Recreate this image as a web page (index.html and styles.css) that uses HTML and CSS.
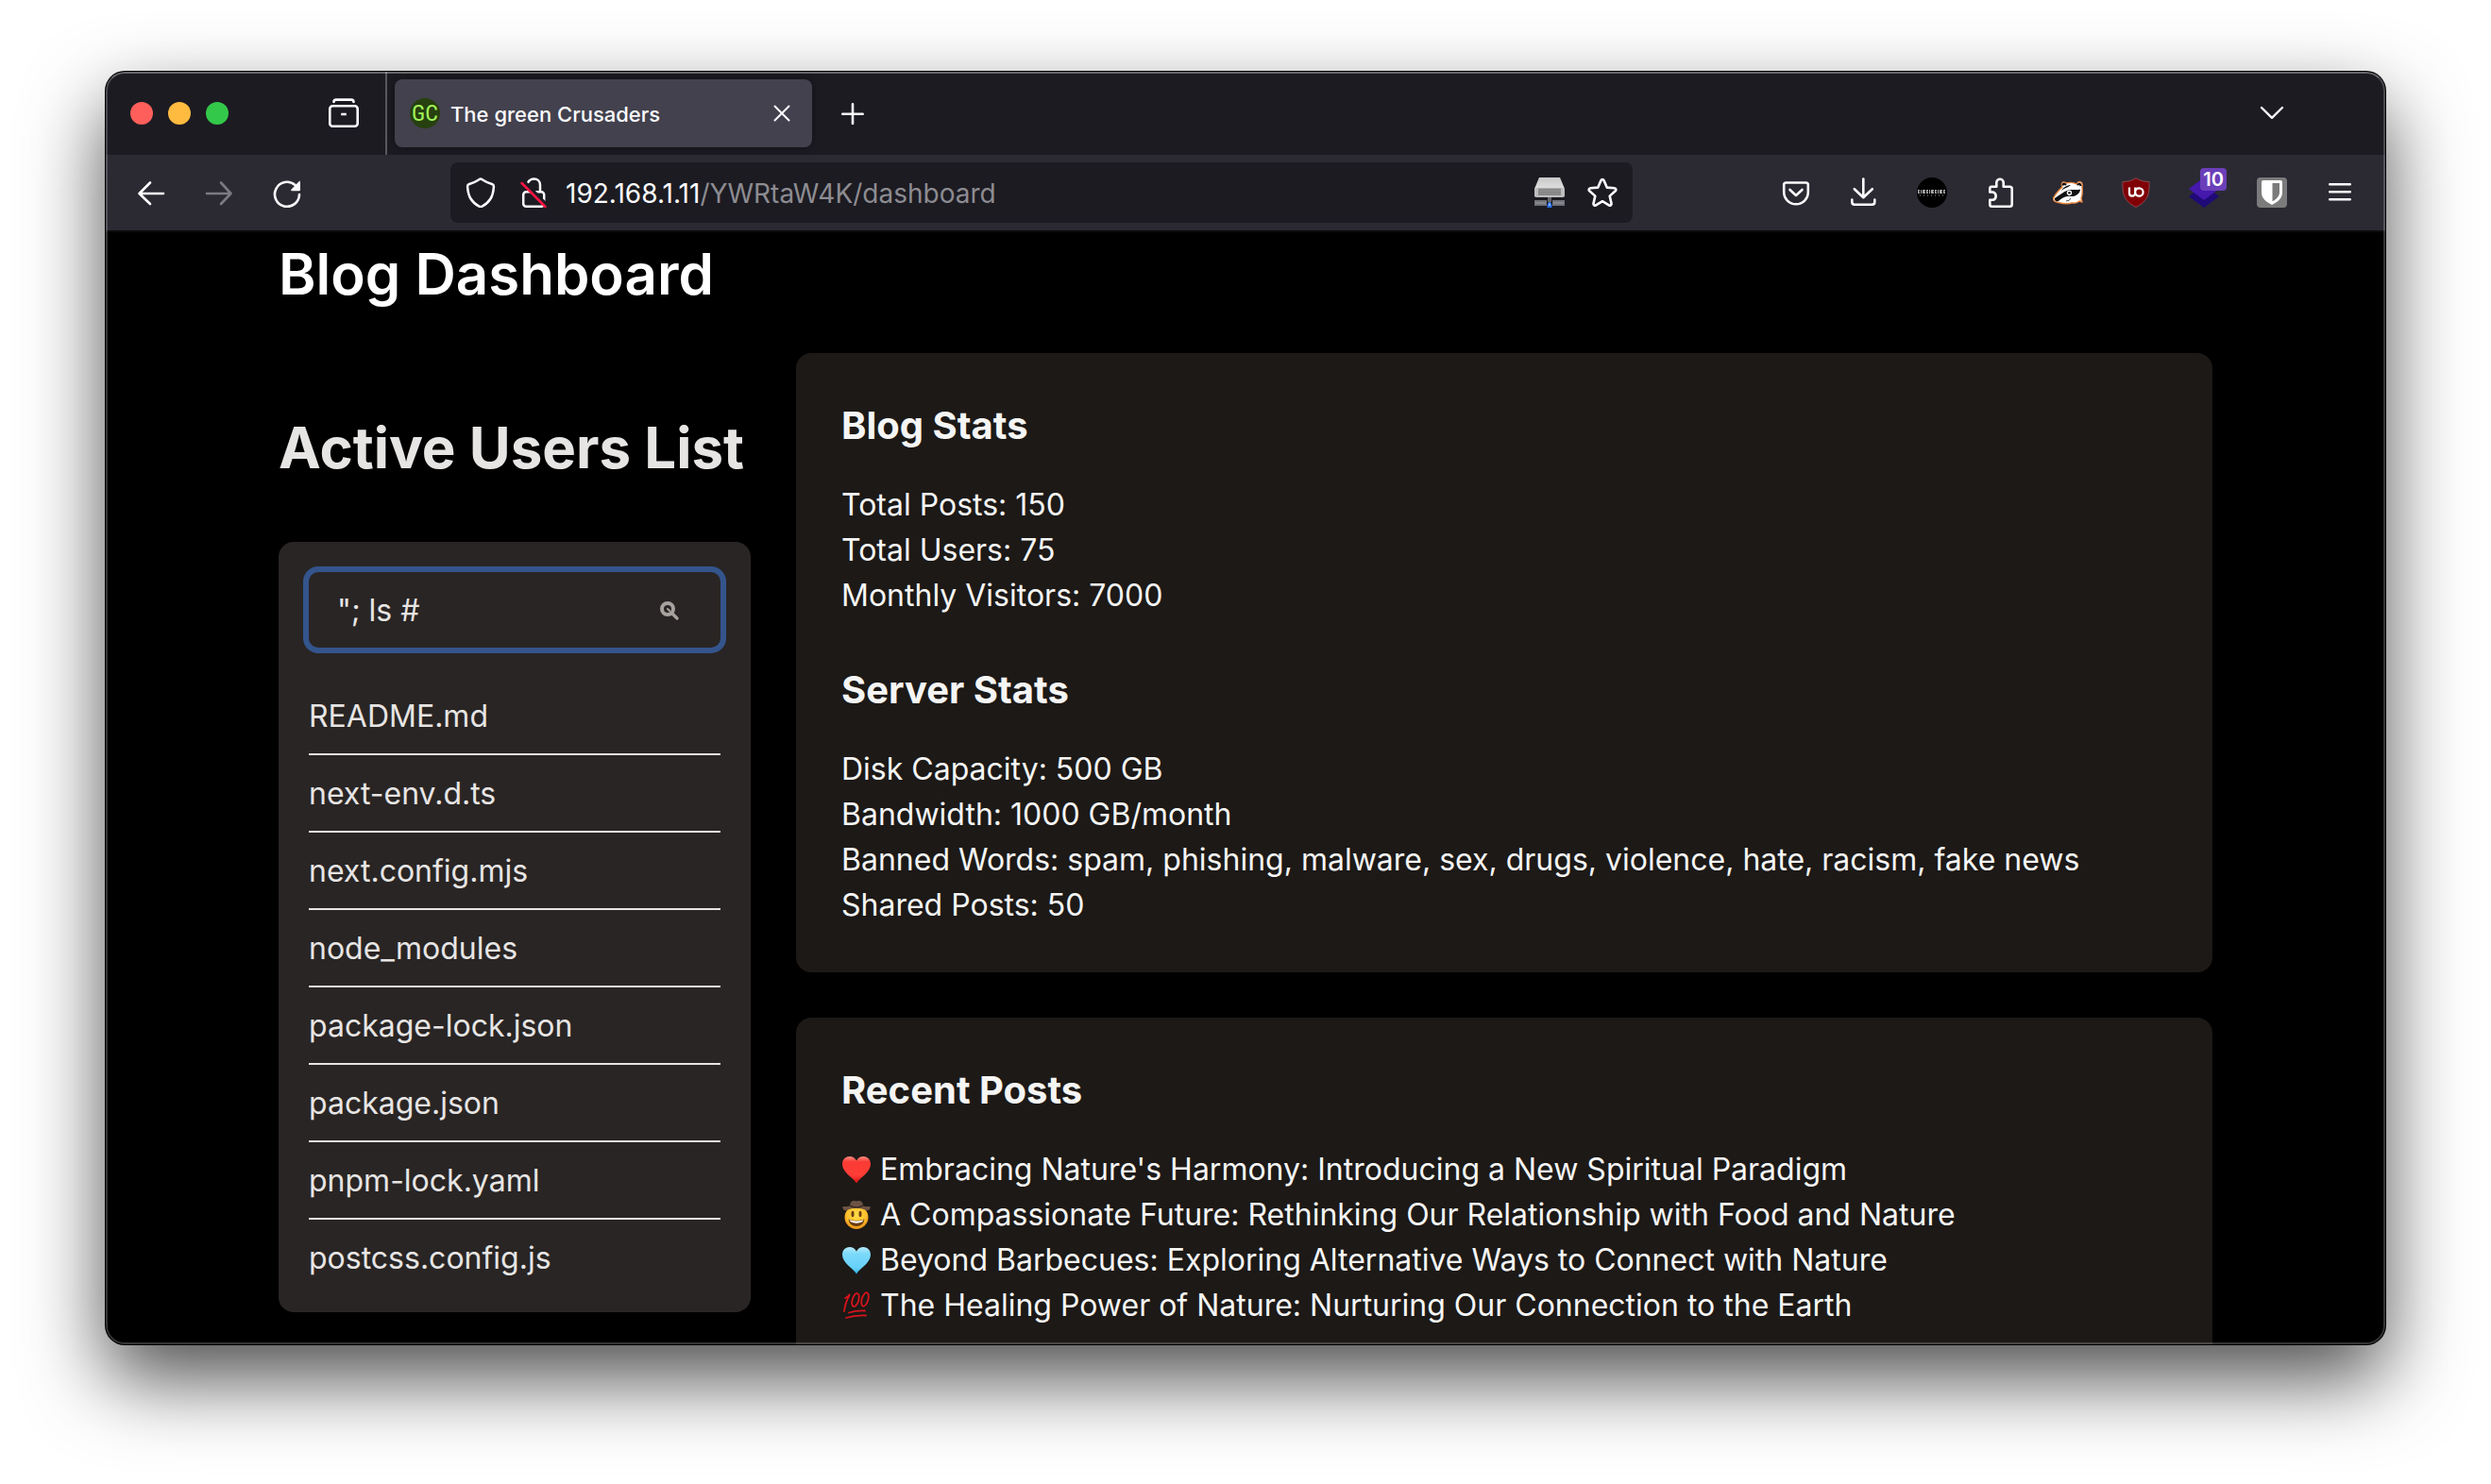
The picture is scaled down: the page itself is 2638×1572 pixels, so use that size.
FILE: index.html
```html
<!DOCTYPE html>
<html lang="en">
<head>
<meta charset="utf-8">
<meta name="viewport" content="width=device-width, initial-scale=1">
<title>The green Crusaders</title>
<link rel="stylesheet" href="styles.css">
</head>
<body>
<div class="window">
  <div class="tabbar">
    <div class="tabbar-start">
      <button class="light light-close" aria-label="Close window"></button>
      <button class="light light-min" aria-label="Minimize window"></button>
      <button class="light light-max" aria-label="Zoom window"></button>
      <button class="icon-btn recent" aria-label="Recent browsing">
        <svg width="32" height="32" viewBox="0 0 32 32" fill="none" stroke="#fbfbfe" stroke-width="2.6" stroke-linecap="round"><rect x="1.3" y="8.3" width="29.4" height="21.4" rx="3"/><path d="M5.500 4C5.500 2.500 6.500 1.600 8 1.600H24C25.500 1.600 26.500 2.500 26.500 4"/><path d="M13.200 17H18.800" stroke-linecap="butt"/></svg>
      </button>
    </div>
    <div class="tab">
      <span class="favicon">GC</span>
      <span class="tab-title">The green Crusaders</span>
      <button class="icon-btn tab-close" aria-label="Close tab">
        <svg width="20" height="20" viewBox="0 0 20 20" fill="none" stroke="#fbfbfe" stroke-width="2" stroke-linecap="round"><path d="M2.500 2.500 17.500 17.500M17.500 2.500 2.500 17.500"/></svg>
      </button>
    </div>
    <button class="icon-btn new-tab" aria-label="New tab">
      <svg width="24" height="24" viewBox="0 0 24 24" fill="none" stroke="#fbfbfe" stroke-width="2.600" stroke-linecap="round"><path d="M12 2.300V23M1.300 12.800H22.700"/></svg>
    </button>
    <button class="icon-btn all-tabs" aria-label="List all tabs">
      <svg width="26" height="26" viewBox="0 0 26 26" fill="none" stroke="#fbfbfe" stroke-width="2.400" stroke-linecap="round" stroke-linejoin="round"><path d="M2 7 13 17.800 24 7"/></svg>
    </button>
  </div>

  <div class="toolbar">
    <button class="icon-btn tool" aria-label="Back">
      <svg width="32" height="32" viewBox="0 0 32 32" fill="none" stroke="#fbfbfe" stroke-width="2.600" stroke-linecap="round" stroke-linejoin="round"><path d="M29 17H3.500M15 5.500 3.500 17 15 28"/></svg>
    </button>
    <button class="icon-btn tool" aria-label="Forward" disabled>
      <svg width="32" height="32" viewBox="0 0 32 32" fill="none" stroke="#7c7b82" stroke-width="2.600" stroke-linecap="round" stroke-linejoin="round"><path d="M3 17H28.500M18 5.500 28.500 17 18 28"/></svg>
    </button>
    <button class="icon-btn tool" aria-label="Reload">
      <svg width="32" height="32" viewBox="0 0 32 32"><path d="M24.500 8A13 13 0 1 0 29 18" fill="none" stroke="#fbfbfe" stroke-width="2.600" stroke-linecap="round"/><path d="M30 4.500V13.300C30 14 29.500 14.200 29 14.200H21C20 14.200 19.800 13.400 20.400 12.800L28.600 4.200C29.200 3.600 30 3.800 30 4.500Z" fill="#fbfbfe"/></svg>
    </button>
    <div class="spacer"></div>
    <div class="urlbar">
      <div class="url-icons">
        <svg width="32" height="32" viewBox="0 0 32 32" fill="none" stroke="#fbfbfe" stroke-width="2.500" stroke-linejoin="round"><path d="M16 1.500C16.800 1.500 17.500 2.100 18.500 2.700C21 4.300 24.500 6 28 7C29.300 7.400 30 8.200 29.900 9.600C29.600 14.500 29 18.500 26.500 22.500C24 26.500 20.500 29.200 17.500 30.600C16.400 31.100 15.600 31.100 14.500 30.600C11.500 29.200 8 26.500 5.500 22.500C3 18.500 2.400 14.500 2.100 9.600C2 8.200 2.700 7.400 4 7C7.500 6 11 4.300 13.500 2.700C14.500 2.100 15.200 1.500 16 1.500Z"/></svg>
        <svg width="32" height="32" viewBox="0 0 32 32" fill="none" stroke="#fbfbfe" stroke-width="2.500" stroke-linecap="round"><rect x="5.200" y="15.200" width="22" height="15.500" rx="3"/><path d="M10 5.500C11.500 2.800 13.600 1.500 16.500 1.500C20.500 1.500 23 4.300 23 8V15"/><path d="M5.800 4.500 30 29.500" stroke="#1c1b22" stroke-width="4"/><path d="M3.600 6 28.500 31" stroke="#ff1443"/></svg>
      </div>
      <div class="url"><span class="host">192.168.1.11</span>/YWRtaW4K/dashboard</div>
      <div class="url-icons">
        <svg width="32" height="32" viewBox="0 0 32 32"><defs><linearGradient id="disk" x1="0" y1="0" x2="0" y2="1"><stop offset="0" stop-color="#c9c9c9"/><stop offset="1" stop-color="#ededed"/></linearGradient></defs><path d="M5 0H27L32 12V20H0V12Z" fill="url(#disk)"/><path d="M0 11H32V19Q32 21 30 21H2Q0 21 0 19Z" fill="#bdbdbd"/><path d="M4 11.500H28V19H4Z" fill="#999"/><path d="M4 13.200H28M4 15.500H28M4 17.700H28" stroke="#777" stroke-width="1"/><path d="M0 24H13V30H0ZM19 24H32V30H19Z" fill="#707277"/><path d="M1 27H12M20 27H31" stroke="#85888d" stroke-width="2"/><path d="M14 21H18V26H14Z" fill="#666"/><path d="M13.500 32V29L15 26H17L18.500 29V32Z" fill="#2c6be0"/><path d="M15 27.500H17V30H15Z" fill="#79b3ff"/></svg>
        <button class="icon-btn" aria-label="Bookmark this page">
          <svg width="32" height="32" viewBox="0 0 32 32" fill="none" stroke="#fbfbfe" stroke-width="2.600" stroke-linejoin="round"><path d="M14.400 3.200C15 1.700 17 1.700 17.600 3.200L20.700 10.600L28.700 11.300C30.300 11.500 30.900 13.200 29.700 14.300L23.700 19.600L25.500 27.600C25.800 29.100 24.200 30.200 22.900 29.400L16 25.200L9.100 29.400C7.800 30.200 6.200 29.100 6.500 27.600L8.300 19.600L2.300 14.300C1.100 13.200 1.700 11.500 3.300 11.300L11.300 10.600Z"/></svg>
        </button>
      </div>
    </div>
    <div class="spacer"></div>
    <button class="icon-btn tool" aria-label="Save to Pocket">
      <svg width="32" height="32" viewBox="0 0 32 32" fill="none" stroke="#fbfbfe" stroke-width="2.600" stroke-linecap="round" stroke-linejoin="round"><path d="M5.500 5.500H26.500Q28.800 5.500 28.800 7.800V15.500A12.800 12.800 0 0 1 3.200 15.500V7.800Q3.200 5.500 5.500 5.500Z"/><path d="M9.500 13 16 19 22.500 13"/></svg>
    </button>
    <button class="icon-btn tool" aria-label="Downloads">
      <svg width="32" height="32" viewBox="0 0 32 32" fill="none" stroke="#fbfbfe" stroke-width="2.600" stroke-linecap="round" stroke-linejoin="round"><path d="M15.300 1.500V21M5.800 12.200 15.300 21.200 24.800 12.200M3.300 23.500V26Q3.300 28.700 6 28.700H24.600Q27.300 28.700 27.300 26V23.500"/></svg>
    </button>
    <button class="icon-btn tool" aria-label="Extension">
      <svg width="32" height="32" viewBox="0 0 32 32"><circle cx="16" cy="16" r="16" fill="#000"/><path d="M1 15H31" stroke="#a8a8a8" stroke-width="4" stroke-dasharray="2 1 1 1 3 1"/><path d="M2 15H30" stroke="#222" stroke-width="1" stroke-dasharray="1 2"/><path d="M3 19H29" stroke="#666" stroke-width="1.500" stroke-dasharray="1 3"/></svg>
    </button>
    <button class="icon-btn tool" aria-label="Extensions">
      <svg width="32" height="32" viewBox="0 0 32 32" fill="none" stroke="#fbfbfe" stroke-width="2.600" stroke-linejoin="round"><path d="M6.700 9.700H12.300V5.500A3.700 3.700 0 0 1 19.700 5.500V9.700H26.300Q28.700 9.700 28.700 12V28.500Q28.700 30.700 26.300 30.700H7.500Q5.300 30.700 5.300 28.500V23.800H8.500A4.300 4.300 0 0 0 8.500 15.500H5.300V12Q5.300 9.700 6.700 9.700Z"/></svg>
    </button>
    <button class="icon-btn tool" aria-label="Privacy Badger">
      <svg width="32" height="32" viewBox="0 0 32 32"><path d="M1 21C3 17 7 13 10 10C8 6 11 3 14 6C18 5 22 5 25 7C27 3 32 4 31 9C31 13 32 18 30 22L31 26L28 25C25 28 22 27 20 27C15 29 8 27 4 26C1 26 0 23 1 21Z" fill="#fff" stroke="#e8863c" stroke-width="1.400" stroke-linejoin="round"/><path d="M2 22C7 19 11 15 16 13.500C20 12 25 14 29 12.500C29 17 24 20.500 19 20C14 19 9 22.500 6 25C3 26 1.500 24 2 22Z" fill="#111"/><path d="M9 14C11 10.500 15 8 19 8C16 10.500 12 11.500 9 14Z" fill="#111"/><path d="M10.500 8.500Q11 5 14 8M26 8Q29 5 29.500 9" fill="none" stroke="#111" stroke-width="2.200"/><circle cx="17.500" cy="16.300" r="2.700" fill="#fff"/><circle cx="17.500" cy="16.300" r="1.300" fill="#111"/><path d="M14 25Q18 25 19 22" fill="none" stroke="#555" stroke-width="1"/></svg>
    </button>
    <button class="icon-btn tool" aria-label="uBlock Origin">
      <svg width="32" height="32" viewBox="0 0 32 32"><path d="M16 .500C20 3.500 25 4.500 30 4.500C30.500 17 29 25 16 31.500C3 25 1.500 17 2 4.500C7 4.500 12 3.500 16 .500Z" fill="#800006" stroke="#8b4a50" stroke-width="1"/><path d="M9 10.500V16.500Q9 19.700 12 19.700Q15.200 19.700 15.200 16V10.500M15.200 15.500A4.200 4.200 0 1 0 19.400 11.300Q15.200 11.300 15.200 15.500" fill="none" stroke="#fff" stroke-width="2.200"/></svg>
    </button>
    <button class="icon-btn tool layers" aria-label="Wappalyzer, 10 detected">
      <svg width="32" height="32" viewBox="0 0 32 32"><path d="M16 8 32 20 16 32 0 20Z" fill="#1f0a78"/><path d="M16 0 32 12 16 24 0 12Z" fill="#4619ad"/></svg>
      <span class="badge">10</span>
    </button>
    <button class="icon-btn tool" aria-label="Bitwarden">
      <svg width="32" height="32" viewBox="0 0 32 32"><rect width="32" height="32" rx="4" fill="#7b7b7b"/><path d="M7 3H25Q27 3 27 5V16C27 22 22 26 16 29C10 26 5 22 5 16V5Q5 3 7 3Z" fill="#fff"/><path d="M16.500 6H24V16C24 20 20.500 23 16.500 25.300Z" fill="#7b7b7b"/></svg>
    </button>
    <button class="icon-btn tool" aria-label="Menu">
      <svg width="32" height="32" viewBox="0 0 32 32" fill="none" stroke="#fbfbfe" stroke-width="2.400" stroke-linecap="round"><path d="M5.200 7.200H26.800M5.200 15.200H26.800M5.200 23.200H26.800"/></svg>
    </button>
  </div>

  <main class="page">
    <div class="container">
      <h1 class="title">Blog Dashboard</h1>
      <div class="columns">
        <aside class="users">
          <h2 class="title users-title">Active Users List</h2>
          <div class="users-card">
            <div class="search">
              <input class="search-input" type="text" aria-label="Search users" value="&quot;; ls #">
              <svg width="20" height="20" viewBox="0 0 20 20" fill="none" stroke="#a8a29e" stroke-linecap="round"><circle cx="8" cy="8" r="6" stroke-width="4"/><path d="M12.500 12.500 18 18" stroke-width="3.200"/><path d="M8 8 10.500 10.500" stroke-width="2"/></svg>
            </div>
            <ul class="users-list">
              <li>README.md</li>
              <li>next-env.d.ts</li>
              <li>next.config.mjs</li>
              <li>node_modules</li>
              <li>package-lock.json</li>
              <li>package.json</li>
              <li>pnpm-lock.yaml</li>
              <li>postcss.config.js</li>
            </ul>
          </div>
        </aside>
        <div class="panels">
          <section class="panel">
            <div class="group">
              <h3>Blog Stats</h3>
              <p>Total Posts: 150</p>
              <p>Total Users: 75</p>
              <p>Monthly Visitors: 7000</p>
            </div>
            <div class="group">
              <h3>Server Stats</h3>
              <p>Disk Capacity: 500 GB</p>
              <p>Bandwidth: 1000 GB/month</p>
              <p>Banned Words: spam, phishing, malware, sex, drugs, violence, hate, racism, fake news</p>
              <p>Shared Posts: 50</p>
            </div>
          </section>
          <section class="panel">
            <div class="group">
              <h3>Recent Posts</h3>
              <ul class="posts">
                <li>
                  <svg width="32" height="32" viewBox="0 0 32 32"><defs><linearGradient id="red" x1="0" y1="0" x2="0" y2="1"><stop offset="0" stop-color="#ff8d80"/><stop offset=".2" stop-color="#fa3a34"/><stop offset=".7" stop-color="#ff3d37"/><stop offset="1" stop-color="#d01010"/></linearGradient></defs><path d="M16 30.500C12 24 1 19 1 10C1 1.500 12 -1 16 6.500C20 -1 31 1.500 31 10C31 19 20 24 16 30.500Z" fill="url(#red)"/></svg>
                  <span>Embracing Nature's Harmony: Introducing a New Spiritual Paradigm</span>
                </li>
                <li>
                  <svg width="32" height="32" viewBox="0 0 32 32"><defs><radialGradient id="face" cx=".5" cy=".4" r=".6"><stop offset="0" stop-color="#ffdf49"/><stop offset=".7" stop-color="#fbbd2c"/><stop offset="1" stop-color="#e38b14"/></radialGradient></defs><circle cx="16" cy="18.500" r="12.500" fill="url(#face)"/><path d="M1 7.500C4 6 7 8 9 6C9 2 12 0 16 1.500C20 0 23 2 23 6C25 8 28 6 31 7.500C30 11 28 12 26 11C20 8 12 8 6 11C4 12 2 11 1 7.500Z" fill="#6c5344"/><path d="M9 6Q16 10 23 6" fill="none" stroke="#3b2a22" stroke-width="1.500"/><ellipse cx="12" cy="15" rx="1.500" ry="3.200" fill="#6b3c10"/><ellipse cx="20" cy="15" rx="1.500" ry="3.200" fill="#6b3c10"/><path d="M7.500 20.500Q16 23.500 24.500 20.500Q23.500 28 16 28Q8.500 28 7.500 20.500Z" fill="#6b3c10"/><path d="M8.500 21.200Q16 24 23.500 21.200Q23 24 16 24.700Q9 24 8.500 21.200Z" fill="#fff"/></svg>
                  <span>A Compassionate Future: Rethinking Our Relationship with Food and Nature</span>
                </li>
                <li>
                  <svg width="32" height="32" viewBox="0 0 32 32"><defs><linearGradient id="blue" x1="0" y1="0" x2="0" y2="1"><stop offset="0" stop-color="#b5e9fb"/><stop offset=".25" stop-color="#7cdafa"/><stop offset=".8" stop-color="#64d0f8"/><stop offset="1" stop-color="#22aee0"/></linearGradient></defs><path d="M16 30.500C12 24 1 19 1 10C1 1.500 12 -1 16 6.500C20 -1 31 1.500 31 10C31 19 20 24 16 30.500Z" fill="url(#blue)"/></svg>
                  <span>Beyond Barbecues: Exploring Alternative Ways to Connect with Nature</span>
                </li>
                <li>
                  <svg width="32" height="32" viewBox="0 0 32 32" fill="none" stroke="#d9141c" stroke-width="1.800" stroke-linecap="round"><path d="M4 8Q7 7 9 4Q4 13 3 22"/><ellipse cx="15" cy="10" rx="3.300" ry="7.300" transform="rotate(17 15 10)"/><ellipse cx="25" cy="9.500" rx="3.300" ry="7.500" transform="rotate(17 25 9.500)"/><path d="M8 23.500Q16 21 25 21.500M5 29Q15 26 26 26.500"/></svg>
                  <span>The Healing Power of Nature: Nurturing Our Connection to the Earth</span>
                </li>
              </ul>
            </div>
          </section>
        </div>
      </div>
    </div>
  </main>
</div>
</body>
</html>
```
FILE: styles.css
```css
* {
  box-sizing: border-box;
  margin: 0;
  padding: 0;
}

body {
  height: 100vh;
  padding: 76px 112px 148px;
  background: #fff;
  overflow: hidden;
  font-family: Inter, "Liberation Sans", sans-serif;
  font-size: 32px;
  line-height: 48px;
}

ul {
  list-style: none;
}

svg {
  display: block;
  flex: none;
}

/* Window frame */
.window {
  position: relative;
  display: flex;
  flex-direction: column;
  height: 100%;
  border-radius: 20px;
  background: #000;
  overflow: hidden;
  box-shadow: 0 0 0 1px #000, 0 36px 84px rgba(0, 0, 0, 0.7);
}

.window::after {
  content: "";
  position: absolute;
  inset: 0;
  border: 2px solid rgba(255, 255, 255, 0.2);
  border-top-color: rgba(255, 255, 255, 0.32);
  border-radius: 20px;
  pointer-events: none;
}

.icon-btn {
  display: flex;
  align-items: center;
  justify-content: center;
  flex: none;
  border: 0;
  background: none;
}

/* Tab strip */
.tabbar {
  display: flex;
  align-items: center;
  flex: none;
  height: 88px;
  padding-right: 84px;
  background: #1c1b22;
}

.tabbar-start {
  display: flex;
  align-items: center;
  gap: 16px;
  width: 298px;
  height: 100%;
  padding: 0 28px 0 26px;
  border-right: 2px solid #59585e;
}

.light {
  width: 24px;
  height: 24px;
  border: 0;
  border-radius: 50%;
}

.light-close { background: #ff5f5a; }
.light-min { background: #ffbb40; }
.light-max { background: #34c84a; }

.recent {
  margin-left: auto;
}

.tab {
  display: flex;
  align-items: center;
  gap: 11px;
  width: 442px;
  height: 72px;
  margin-left: 8px;
  padding: 0 22px 0 16px;
  border-radius: 8px;
  background: #42414d;
  box-shadow: 0 0 8px rgba(0, 0, 0, 0.4);
}

.favicon {
  display: grid;
  place-items: center;
  width: 32px;
  height: 32px;
  border-radius: 50%;
  background: #27400f;
  color: #a3f65c;
  font: 24px/32px "Liberation Sans Narrow", "Roboto Condensed", "Open Sans Condensed", sans-serif;
}

.tab-title {
  flex: 1;
  padding-top: 2px;
  color: #fbfbfe;
  font-size: 22px;
  font-weight: 500;
  line-height: 32px;
}

.new-tab {
  width: 64px;
  height: 64px;
  margin-left: 11px;
}

.all-tabs {
  width: 72px;
  height: 72px;
  margin-left: auto;
}

/* Navigation toolbar */
.toolbar {
  display: flex;
  align-items: center;
  flex: none;
  height: 82px;
  padding: 0 12px;
  background: #2b2a33;
  border-bottom: 2px solid #0c0c0d;
}

.tool {
  width: 72px;
  height: 64px;
}

.spacer {
  flex: 137 1 0;
}

.urlbar {
  display: flex;
  align-items: center;
  flex: 1220 1 32px;
  gap: 18px;
  height: 64px;
  padding: 0 16px;
  border-radius: 8px;
  background: #1c1b22;
}

.url-icons {
  display: flex;
  gap: 24px;
}

.url {
  flex: 1;
  padding-top: 2px;
  color: #8d8c91;
  font-size: 28px;
  white-space: nowrap;
}

.host {
  color: #fbfbfe;
}

.layers {
  position: relative;
}

.badge {
  position: absolute;
  top: 6px;
  left: 32px;
  width: 28px;
  height: 24px;
  border-radius: 4px;
  background: #6b3fb9;
  color: #fff;
  font: 600 20px/24px Inter, sans-serif;
  text-align: center;
}

/* Dashboard */
.page {
  flex: 1;
  min-height: 0;
  padding-top: 8px;
  background: #000;
  color: #f5f5f4;
  overflow: hidden;
}

.container {
  max-width: 2048px;
  margin: 0 auto;
}

.title {
  color: #fff;
  font-size: 60px;
  font-weight: 600;
  line-height: 72px;
  white-space: nowrap;
}

.columns {
  display: flex;
  align-items: flex-start;
  gap: 48px;
  margin-top: 48px;
}

.users {
  flex: 1 1 0;
  min-width: 0;
  padding-top: 64px;
  color: #e7e5e4;
}

.users-title {
  margin-bottom: 64px;
  color: #e7e5e4;
  font-weight: 700;
}

.users-card {
  padding: 32px 32px 18px;
  border-radius: 16px;
  background: #292524;
}

.search {
  display: flex;
  align-items: center;
  height: 80px;
  margin-bottom: 32px;
  padding: 2px 44px 0 30px;
  border-radius: 10px;
  box-shadow: 0 0 0 6px #34548c;
}

.search-input {
  flex: 1;
  min-width: 0;
  border: 0;
  outline: 0;
  background: none;
  color: #e7e5e4;
  font: inherit;
}

.users-list li {
  padding: 17px 0 15px;
  border-bottom: 2px solid #e7e5e4;
}

.users-list li:last-child {
  border-bottom: 0;
}

.panels {
  display: flex;
  flex-direction: column;
  flex: 3 1 0;
  min-width: 0;
  gap: 48px;
}

.panel {
  display: flex;
  flex-direction: column;
  gap: 48px;
  padding: 49px 48px 47px;
  border-radius: 16px;
  background: #1c1917;
}

.group h3 {
  margin-bottom: 32px;
  font-size: 40px;
  font-weight: 700;
  line-height: 56px;
}

.posts li {
  display: flex;
  align-items: center;
  gap: 9px;
}
```
